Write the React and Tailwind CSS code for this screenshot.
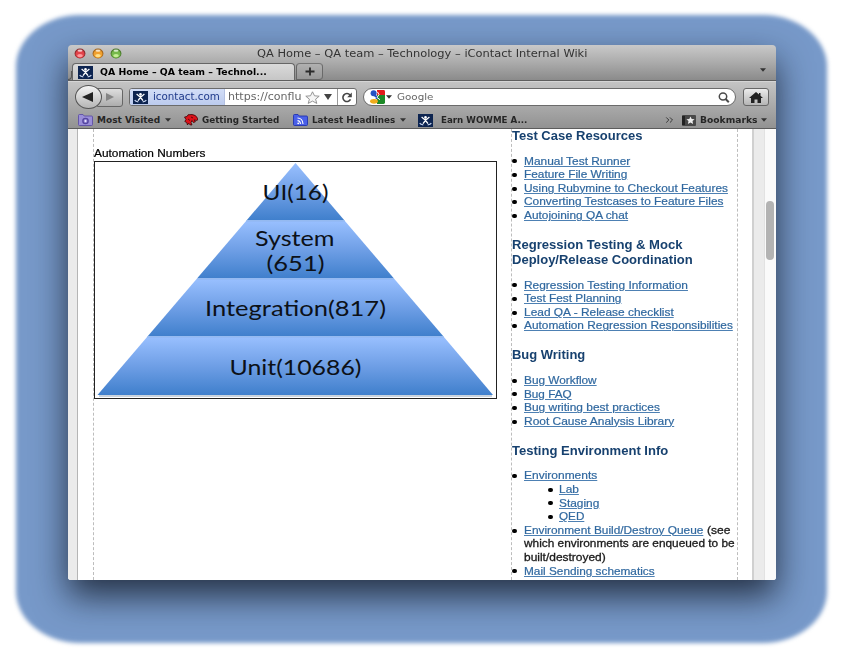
import React, { useLayoutEffect, useRef, useState } from "react";

const LUCIDA = "font-['DejaVu_Sans',sans-serif]";

/* A line of text stretched horizontally to a given width. */
function Fit({ w, className = "", children }) {
  const ref = useRef(null);
  const [scale, setScale] = useState(1);
  useLayoutEffect(() => {
    setScale(w / ref.current.offsetWidth);
  }, [w]);
  return (
    <span className="flex shrink-0 whitespace-nowrap" style={{ width: w }}>
      <span
        ref={ref}
        className={"block shrink-0 origin-left " + className}
        style={{ transform: `scaleX(${scale})` }}
      >
        {children}
      </span>
    </span>
  );
}

function Favicon({ className = "" }) {
  return (
    <svg className={"block h-[13px] w-[15px] shrink-0 " + className} viewBox="0 0 15 13">
      <rect width="15" height="13" fill="#0d2450" />
      <circle cx="7.5" cy="3.4" r="1.3" fill="#fff" />
      <path d="M3.600 3 6.400 5.400h2.200L11.400 3M7.500 5v2.500M7 7 5 9.600M8 7l2 2.600" fill="none" stroke="#fff" strokeWidth="1.300" />
      <path d="M1.700 9q.800 1.700 3.600 1.900M13.300 9q-.800 1.700-3.600 1.900" fill="none" stroke="#c4d2ee" strokeWidth="1.200" />
    </svg>
  );
}

function Caret({ className = "" }) {
  return (
    <svg className={"block h-[4px] w-[6px] shrink-0 " + className} viewBox="0 0 6 4">
      <path d="M0 .3h6L3 3.8z" fill="#333" />
    </svg>
  );
}

function Light({ outer, inner, glow }) {
  return (
    <svg className="block h-[11px] w-[12px]" viewBox="0 0 12 11">
      <ellipse cx="6" cy="5.5" rx="5.4" ry="5" fill={outer} />
      <ellipse cx="6" cy="6" rx="4.5" ry="4" fill={inner} />
      <ellipse cx="6" cy="7.6" rx="2.8" ry="1.7" fill={glow} />
      <ellipse cx="6" cy="2.6" rx="2.5" ry="1.2" fill="#fff" opacity=".7" />
    </svg>
  );
}

function TitleBar() {
  return (
    <div className="flex h-[36px] flex-col border-b border-[#5f5f5f] bg-linear-to-b from-[#c9c9c9] via-[#ababab] to-[#8b8b8b]">
      <div className="flex h-[19px] items-start">
        <div className="flex w-[189px] gap-[6px] pt-[3px] pl-[6px]">
          <Light outer="#8c2b2d" inner="#e2434a" glow="#ff9a9c" />
          <Light outer="#a5661b" inner="#f0a02f" glow="#ffe08a" />
          <Light outer="#4b7a2c" inner="#76b94b" glow="#c5ee95" />
        </div>
        <div className="pt-px">
          <Fit w={330} className={`${LUCIDA} text-[10.5px] leading-[14px] text-[#333]`}>
            QA Home – QA team – Technology – iContact Internal Wiki
          </Fit>
        </div>
      </div>
      <div className="flex h-[17px] items-start">
        <div className="mt-[8px] h-[9px] w-[4px] rounded-br-[4px] border-r border-b border-[#555]" />
        <div className="flex h-[17px] w-[223px] items-center rounded-t-[4px] border-t border-r border-l border-[#666] bg-linear-to-b from-[#dadada] to-[#c6c6c6] pl-[5px]">
          <Favicon />
          <span className="w-[7px]" />
          <Fit w={167} className={`${LUCIDA} text-[9.5px] leading-[14px] font-bold text-black`}>
            QA Home – QA team – Technol...
          </Fit>
        </div>
        <div className="ml-[1px] flex h-[17px] w-[27px] items-center justify-center rounded-t-[4px] rounded-br-[4px] border border-t-[#777] border-r-[#6a6a6a] border-b-[#666] border-l-[#666] bg-linear-to-b from-[#b0b0b0] to-[#989898]">
          <svg className="block h-[9px] w-[10px]" viewBox="0 0 10 9">
            <path d="M5 .5v8M.5 4.5h9" stroke="#2b2b2b" strokeWidth="1.8" />
          </svg>
        </div>
        <Caret className="mt-[5px] mr-[10px] ml-auto" />
      </div>
    </div>
  );
}

function NavBar() {
  return (
    <div className="flex h-[30px] items-center pl-[7px]">
      <div className="flex items-center">
        <div className="z-10 flex h-[24px] w-[27px] items-center justify-center rounded-[50%] border border-[#555] bg-linear-to-b from-[#f4f4f4] to-[#b5b5b5]">
          <svg className="mr-[3px] block h-[10px] w-[11px]" viewBox="0 0 11 10">
            <path d="M0 5 11 0v10z" fill="#222" />
          </svg>
        </div>
        <div className="ml-[-5px] flex h-[19px] w-[26px] items-center justify-center rounded-r-[3px] border border-[#666] bg-linear-to-b from-[#dedede] to-[#adadad]">
          <svg className="block h-[8px] w-[8px]" viewBox="0 0 8 8">
            <path d="M0 0v8l8-4z" fill="#858585" />
          </svg>
        </div>
      </div>
      <div className="ml-[6px] flex h-[18px] w-[228px] items-center overflow-hidden rounded-[3px] border border-[#6b6b6b] bg-white">
        <div className="flex h-full w-[95px] shrink-0 items-center border-r border-[#b4c1e2] bg-linear-to-b from-[#d3def7] to-[#bccbee] pl-[3px]">
          <Favicon />
          <span className="w-[5px]" />
          <Fit w={67} className={`${LUCIDA} text-[10px] leading-[14px] text-[#1f3a8a]`}>icontact.com</Fit>
        </div>
        <span className="w-[3px]" />
        <div className="w-[73px] shrink-0 overflow-hidden">
          <Fit w={73} className={`${LUCIDA} text-[10px] leading-[14px] text-[#666]`}>https://conflu</Fit>
        </div>
        <svg className="ml-[4px] block h-[13px] w-[15px] shrink-0" viewBox="0 0 15 13">
          <path d="m7.5.8 2 4 4.7.4-3.6 3 1.2 4.2-4.3-2.3-4.3 2.3 1.2-4.2-3.6-3 4.7-.4z" fill="#f5f5f5" stroke="#8a8a8a" strokeWidth=".9" />
        </svg>
        <svg className="ml-[4px] block h-[6px] w-[8px] shrink-0" viewBox="0 0 8 6">
          <path d="M0 0h8L4 6z" fill="#444" />
        </svg>
        <div className="ml-[5px] flex h-full grow items-center justify-center border-l border-[#999]">
          <svg className="block h-[11px] w-[12px]" viewBox="0 0 12 11">
            <path d="M9 3A4 4 0 1 0 9.5 7.3" fill="none" stroke="#444" strokeWidth="1.6" />
            <path d="M10.8.6v4.6H6.2z" fill="#444" />
          </svg>
        </div>
      </div>
      <div className="ml-[6px] flex h-[18px] w-[373px] items-center rounded-full border border-[#6b6b6b] bg-white pl-[5px]">
        <svg className="block h-[14px] w-[16px] shrink-0" viewBox="0 0 16 14">
          <path d="M8 0h6.500q1.500 0 1.500 1.400V6H8z" fill="#e21b1b" />
          <path d="M8 5h8v7.600q0 1.400-1.500 1.400H8z" fill="#1d8a28" />
          <path d="M0 6h8v8H1.500Q0 14 0 12.600z" fill="#fff" />
          <ellipse cx="4.600" cy="3.200" rx="3" ry="3" fill="#2452c4" />
          <path d="M5.500 5.500q3 1 2 3.500" fill="none" stroke="#2452c4" strokeWidth="2" />
          <ellipse cx="5" cy="11.300" rx="3.900" ry="2.400" fill="#efac1b" />
          <path d="M8.400 1.800 10 4.600 8 7.500l3 2.200" fill="none" stroke="#fff" strokeWidth="1" />
        </svg>
        <Caret className="ml-[1px]" />
        <span className="w-[5px]" />
        <Fit w={37} className={`${LUCIDA} text-[9.5px] leading-[14px] text-[#666]`}>Google</Fit>
        <svg className="mr-[5px] ml-auto block h-[11px] w-[12px]" viewBox="0 0 12 11">
          <ellipse cx="5" cy="4.500" rx="3.700" ry="3.500" fill="none" stroke="#4a4a4a" strokeWidth="1.500" />
          <path d="m7.600 7 3.200 3.200" stroke="#4a4a4a" strokeWidth="2" />
        </svg>
      </div>
      <div className="ml-[7px] flex h-[18px] w-[26px] items-center justify-center rounded-[3px] border border-[#666] bg-linear-to-b from-[#ececec] to-[#b5b5b5]">
        <svg className="block h-[11px] w-[14px]" viewBox="0 0 14 11">
          <path d="M7 0 0 6h2v5h3.500V7.500h3V11H12V6h2l-2.500-2.200V1H10v1.500z" fill="#222" />
        </svg>
      </div>
    </div>
  );
}

function Mark({ w, children }) {
  return <Fit w={w} className={`${LUCIDA} text-[9px] leading-[12px] font-bold text-[#262626]`}>{children}</Fit>;
}

function Folder({ children, fill, edge }) {
  return (
    <svg className="block h-[12px] w-[15px] shrink-0" viewBox="0 0 15 12">
      <path d="M.5 1.500Q.5.500 1.500.500H5l1.200 1.500h7.300q1 0 1 1v7.500q0 1-1 1h-12q-1 0-1-1z" fill={fill} stroke={edge} strokeWidth=".9" />
      {children}
    </svg>
  );
}

function BookmarksBar() {
  return (
    <div className="flex h-[17px] items-center border-b border-[#5c5c5c] pr-[9px] pl-[10px]">
      <Folder fill="#9a8ed8" edge="#5d4fa6">
        <circle cx="7.500" cy="7" r="2.600" fill="none" stroke="#54459f" strokeWidth="1.400" />
        <circle cx="7.500" cy="7" r=".9" fill="#efeaff" />
      </Folder>
      <span className="w-[4px]" />
      <Mark w={63}>Most Visited</Mark>
      <Caret className="ml-[5px]" />
      <svg className="ml-[13px] block h-[12px] w-[14px] shrink-0" viewBox="0 0 14 12">
        <path d="M.5 3 3 2.500 4 .8 8 .5q4 .300 5.500 3.700l.200 1.800-1.500.5-2-.7 1.200 2-2 .700L8 6.500l-1 2L8 11l-2-.2-1.500-1.600L3.500 11 2.700 8.500.8 7.500 2 5.500z" fill="#dd1219" stroke="#3d0507" strokeWidth=".8" />
        <path d="m7 3 2 1M4 5l2 1.500" stroke="#3d0507" strokeWidth=".8" />
      </svg>
      <span className="w-[4px]" />
      <Mark w={77}>Getting Started</Mark>
      <span className="w-[14px]" />
      <Folder fill="#4a60e8" edge="#2334b0">
        <path d="M4.500 4q5 0 5.500 6M4.500 6.600q2.700 0 3 3.400" fill="none" stroke="#fff" strokeWidth="1.100" />
        <circle cx="5.200" cy="9.300" r=".9" fill="#fff" />
      </Folder>
      <span className="w-[4px]" />
      <Mark w={83}>Latest Headlines</Mark>
      <Caret className="ml-[5px]" />
      <Favicon className="ml-[12px]" />
      <span className="w-[8px]" />
      <Mark w={86}>Earn WOWME A...</Mark>
      <svg className="ml-auto block h-[6px] w-[9px]" viewBox="0 0 9 7">
        <path d="m.7.5 3 3-3 3M5 .5l3 3-3 3" fill="none" stroke="#333" strokeWidth="1.100" />
      </svg>
      <svg className="ml-[8px] block h-[11px] w-[14px]" viewBox="0 0 14 11">
        <rect width="14" height="11" rx="1" fill="#484848" />
        <path d="M0 1h3v9H0z" fill="#222" />
        <path d="m8.500 1.500 1.200 2.500 2.900.3-2.100 1.800.6 2.900-2.600-1.500L5.900 9l.6-2.900-2.100-1.800 2.900-.3z" fill="#eee" />
      </svg>
      <span className="w-[4px]" />
      <Mark w={57}>Bookmarks</Mark>
      <Caret className="ml-[4px]" />
    </div>
  );
}

function Pyramid() {
  const text = "font-['Lato',sans-serif] text-[22px]";
  const label = (x, y, w, s) => (
    <text x={x} y={y} textLength={w} lengthAdjust="spacingAndGlyphs" className={text} fill="#0c1118">{s}</text>
  );
  return (
    <svg className="block h-[236px] w-[401px]" viewBox="95 161.500 401 236">
      <defs>
        <linearGradient id="band" x1="0" y1="0" x2="0" y2="1">
          <stop offset="0" stopColor="#99c0ff" />
          <stop offset=".5" stopColor="#6f9fe6" />
          <stop offset="1" stopColor="#3f7fcc" />
        </linearGradient>
      </defs>
      <path d="M99 395.500h393" stroke="#b8c4d2" strokeWidth="1.500" />
      <path d="M295.500 162.500 344.500 220h-98z" fill="url(#band)" />
      <path d="M246.500 220h98l49.500 58H197z" fill="url(#band)" />
      <path d="M197 278h197l49.500 58h-296z" fill="url(#band)" />
      <path d="M147.500 336h296l49.500 58.500H97.500z" fill="url(#band)" />
      <path d="M246 220.500h99M197 278.500h197M147 336.500h297" stroke="#8fb5ee" strokeWidth="1" />
      {label(262.500, 199.700, 66, "UI(16)")}
      {label(255, 245.300, 79.500, "System")}
      {label(266.500, 270.300, 58, "(651)")}
      {label(205, 315.500, 181, "Integration(817)")}
      {label(229.500, 374, 132, "Unit(10686)")}
    </svg>
  );
}

function Heading({ lines }) {
  return (
    <h3 className="text-[12px] leading-[15px] font-bold text-[#17416f]">
      {lines.map(([t, w]) => (
        <div key={t} className="flex h-[15px]"><Fit w={w}>{t}</Fit></div>
      ))}
    </h3>
  );
}

function Item({ t, w, nested, tail, more }) {
  return (
    <li className={nested ? "pl-[35.500px]" : ""}>
      <div className="flex h-[13.600px] items-center">
        <span className="h-[4px] w-[5px] shrink-0 rounded-full bg-black" />
        <span className="w-[6.500px] shrink-0" />
        <Fit w={w} className="text-[#30689f] underline decoration-[#4d80b3] decoration-1 underline-offset-1 [-webkit-text-stroke:0.2px_#30689f]">{t}</Fit>
        {tail && <span className="w-[4px]" />}
        {tail && <Fit w={tail[1]} className="text-[#1a1a1a] [-webkit-text-stroke:0.3px_#1a1a1a]">{tail[0]}</Fit>}
      </div>
      {more && more.map(([s, sw]) => (
        <div key={s} className="flex h-[13.600px] items-center pl-[11.500px]">
          <Fit w={sw} className="text-[#1a1a1a] [-webkit-text-stroke:0.3px_#1a1a1a]">{s}</Fit>
        </div>
      ))}
    </li>
  );
}

const sections = [
  {
    heading: [["Test Case Resources", 131]],
    items: [
      { t: "Manual Test Runner", w: 106 },
      { t: "Feature File Writing", w: 103.5 },
      { t: "Using Rubymine to Checkout Features", w: 204 },
      { t: "Converting Testcases to Feature Files", w: 199 },
      { t: "Autojoining QA chat", w: 104.5 },
    ],
  },
  {
    heading: [["Regression Testing & Mock", 170], ["Deploy/Release Coordination", 181]],
    items: [
      { t: "Regression Testing Information", w: 163.5 },
      { t: "Test Fest Planning", w: 98 },
      { t: "Lead QA - Release checklist", w: 149.5 },
      { t: "Automation Regression Responsibilities", w: 209 },
    ],
  },
  {
    heading: [["Bug Writing", 73.5]],
    items: [
      { t: "Bug Workflow", w: 73 },
      { t: "Bug FAQ", w: 48 },
      { t: "Bug writing best practices", w: 135.5 },
      { t: "Root Cause Analysis Library", w: 150 },
    ],
  },
  {
    heading: [["Testing Environment Info", 156.5]],
    items: [
      { t: "Environments", w: 73 },
      { t: "Lab", w: 19.5, nested: true },
      { t: "Staging", w: 40, nested: true },
      { t: "QED", w: 25.5, nested: true },
      {
        t: "Environment Build/Destroy Queue",
        w: 179,
        tail: ["(see", 23],
        more: [["which environments are enqueued to be", 211], ["built/destroyed)", 81.5]],
      },
      { t: "Mail Sending schematics", w: 131 },
    ],
  },
];

function Page() {
  return (
    <div className="flex h-[451px] overflow-hidden bg-white font-['Liberation_Sans',Arial,sans-serif] text-[11px] leading-[13.600px]">
      <div className="w-[10px] shrink-0 border-r border-[#b5b5b5] bg-[#ebebeb]" />
      <div className="ml-[15px] w-[418px] shrink-0 border-l border-dashed border-[#bdbdbd] pt-[19px]">
        <div className="flex h-[12.500px] items-center text-black [-webkit-text-stroke:0.2px_#000]">
          <Fit w={111}>Automation Numbers</Fit>
        </div>
        <div className="w-[403px] border border-[#222]">
          <Pyramid />
        </div>
      </div>
      <div className="w-[227px] shrink-0 border-x border-dashed border-[#bdbdbd]">
        <div className="flex flex-col gap-[15.300px]">
          {sections.map((s) => (
            <section key={s.heading[0][0]} className="flex flex-col gap-[10.700px]">
              <Heading lines={s.heading} />
              <ul>
                {s.items.map((i) => <Item key={i.t} {...i} />)}
              </ul>
            </section>
          ))}
        </div>
      </div>
      <div className="ml-[14px] w-[12px] shrink-0 border-l-2 border-[#d0d0d0] bg-[#ebebeb]" />
      <div className="grow border-l border-[#e2e2e2] bg-[#fafafa] pt-[72px] pl-[1px]">
        <div className="h-[59px] w-[8px] rounded-full bg-[#b3b3b3]" />
      </div>
    </div>
  );
}

export default function App() {
  return (
    <div className="relative h-[660px] w-[844px] overflow-hidden bg-white pt-[45px] pl-[68px]">
      <div className="absolute top-[15px] left-[16px] h-[628px] w-[811px] rounded-[64px/52px] bg-[#7799c9] blur-[2px]" />
      <div className="relative h-[535px] w-[708px] rounded-t-[4px] rounded-b-[3px] shadow-[0_16px_34px_rgba(10,15,25,0.75)]">
        <div className="h-full overflow-hidden rounded-t-[4px] rounded-b-[3px]">
          <TitleBar />
          <div className="h-[48px] border-t border-[#d5d5d5] bg-linear-to-b from-[#c4c4c4] to-[#919191]">
            <NavBar />
            <BookmarksBar />
          </div>
          <Page />
        </div>
      </div>
    </div>
  );
}
